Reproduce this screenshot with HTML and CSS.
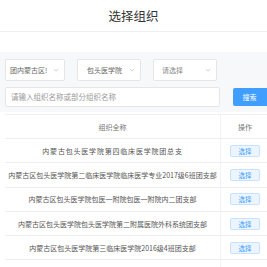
FILE: index.html
```html
<!DOCTYPE html>
<html lang="zh-CN">
<head>
<meta charset="utf-8">
<title>选择组织</title>
<link rel="stylesheet" href="styles.css">
</head>
<body>
<div class="page">
  <div class="header">选择组织</div>
  <div class="filters">
    <div class="select-row">
      <div class="select s1"><span>团内蒙古区!</span><svg class="chev" viewBox="0 0 8 5"><path d="M1 1l3 3 3-3"/></svg></div>
      <div class="select s2"><span>包头医学院</span><svg class="chev" viewBox="0 0 8 5"><path d="M1 1l3 3 3-3"/></svg></div>
      <div class="select s3"><span class="ph">请选择</span><svg class="chev" viewBox="0 0 8 5"><path d="M1 1l3 3 3-3"/></svg></div>
    </div>
    <div class="search-row">
      <div class="input">请输入组织名称或部分组织名称</div>
      <div class="btn-search">搜索</div>
    </div>
  </div>
  <div class="table">
    <div class="tr th">
      <div class="c1">组织全称</div>
      <div class="c2">操作</div>
    </div>
    <div class="tr">
      <div class="c1 wide">内蒙古包头医学院第四临床医学院团总支</div>
      <div class="c2"><span class="btn-pick">选择</span></div>
    </div>
    <div class="tr">
      <div class="c1">内蒙古区包头医学院第二临床医学院临床医学专业2017级6班团支部</div>
      <div class="c2"><span class="btn-pick">选择</span></div>
    </div>
    <div class="tr">
      <div class="c1">内蒙古区包头医学院包医一附院包医一附院内二团支部</div>
      <div class="c2"><span class="btn-pick">选择</span></div>
    </div>
    <div class="tr">
      <div class="c1">内蒙古区包头医学院包头医学院第二附属医院外科系统团支部</div>
      <div class="c2"><span class="btn-pick">选择</span></div>
    </div>
    <div class="tr">
      <div class="c1">内蒙古区包头医学院第三临床医学院2016级4班团支部</div>
      <div class="c2"><span class="btn-pick">选择</span></div>
    </div>
    <div class="tr empty">
      <div class="c1"></div>
      <div class="c2"></div>
    </div>
  </div>
</div>
</body>
</html>
```

FILE: styles.css
```css
html, body {
  margin: 0;
  padding: 0;
  background: #fff;
}
body {
  width: 267px;
  height: 267px;
  overflow: hidden;
  font-family: "Noto Sans CJK SC", "Noto Sans", sans-serif;
  color: #555;
}
.page {
  width: 272px;
}
.header {
  width: 267px;
  height: 31px;
  line-height: 31px;
  text-align: center;
  font-size: 12.5px;
  color: #333;
  border-bottom: 1px solid #f0f0f0;
}
.filters {
  margin-top: 20px;
  background: #f7f8fa;
  padding: 7px 0 5px 5px;
}
.select-row {
  display: flex;
  gap: 12px;
}
.select {
  height: 22px;
  box-sizing: border-box;
  background: #fff;
  border: 1px solid #e6e6e6;
  border-radius: 2px;
  display: flex;
  align-items: center;
  justify-content: space-between;
  padding: 0 5px 0 4px;
  font-size: 7px;
  color: #666;
}
.s1 { width: 60px; }
.s2 { width: 64px; padding-left: 9px; }
.s3 { width: 64px; padding-left: 8px; }
.ph { color: #888; }
.chev {
  width: 6px;
  height: 4px;
  fill: none;
  stroke: #c0c4cc;
  stroke-width: 1;
}
.search-row {
  display: flex;
  gap: 13px;
  margin-top: 6px;
  align-items: flex-start;
}
.input {
  width: 218px;
  height: 20px;
  box-sizing: border-box;
  background: #fff;
  border: 1px solid #e6e6e6;
  border-radius: 2px;
  font-size: 7.5px;
  line-height: 18px;
  padding-left: 5px;
  color: #9a9a9a;
}
.btn-search {
  width: 40px;
  height: 18px;
  line-height: 18px;
  margin-top: 1px;
  background: #409eff;
  color: #fff;
  border-radius: 2px;
  font-size: 7px;
  padding-left: 10px;
  box-sizing: border-box;
}
.table {
  margin-left: 5px;
  margin-top: 2px;
  border-top: 1px solid #f0f0f0;
}
.tr {
  display: flex;
  height: 24.3px;
  border-bottom: 1px solid #ebeef5;
  box-sizing: border-box;
  font-size: 7px;
}
.th {
  height: 24px;
}
.c1 {
  width: 215px;
  display: flex;
  align-items: center;
  justify-content: center;
  white-space: nowrap;
  border-right: 1px solid #f2f2f2;
}
.wide {
  letter-spacing: 0.8px;
}
.c2 {
  width: 48px;
  display: flex;
  align-items: center;
  justify-content: center;
}
.th .c1, .th .c2 {
  color: #777;
}
.btn-pick {
  width: 30px;
  height: 12px;
  box-sizing: border-box;
  display: flex;
  align-items: center;
  justify-content: center;
  background: #ecf5ff;
  border: 1px solid #c6e2ff;
  border-radius: 2px;
  color: #409eff;
  font-size: 6.5px;
}
```
